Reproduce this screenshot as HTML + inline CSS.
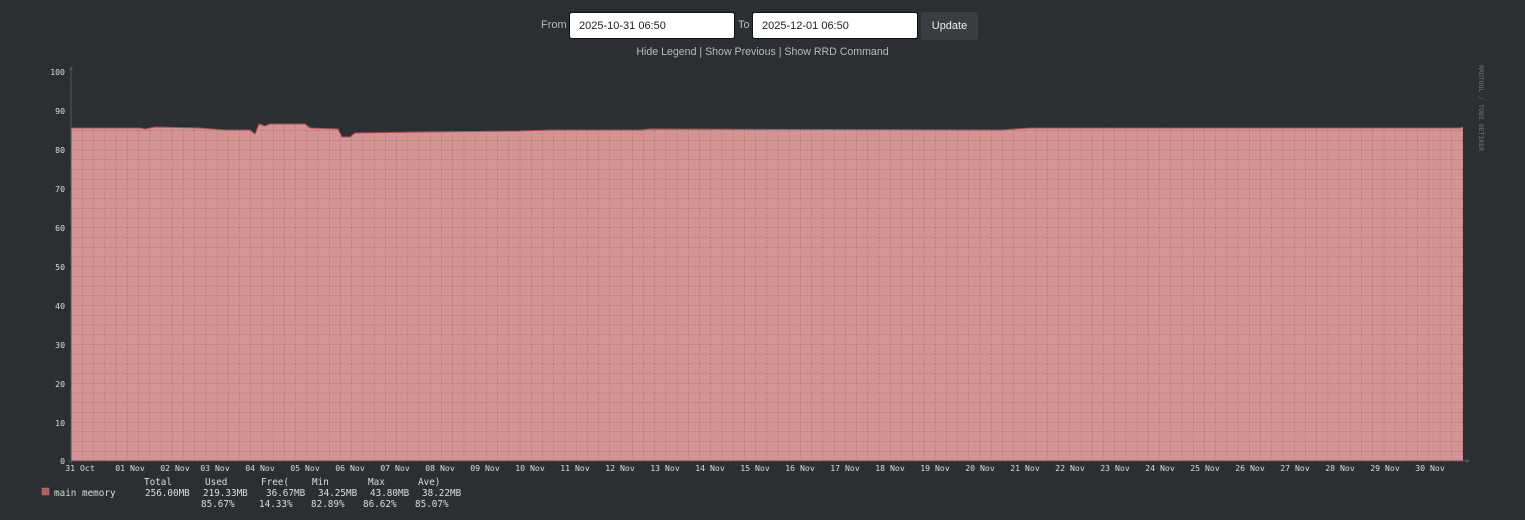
<!DOCTYPE html>
<html><head><style>
body{margin:0;background:#2b2e33;width:1525px;height:520px;overflow:hidden;font-family:"Liberation Sans",sans-serif;}
.f{position:absolute;top:12px;height:27px;border:1px solid #111;border-radius:3px;background:#fff;color:#222;font-size:11px;line-height:27px;padding-left:9px;box-sizing:border-box}
.lbl{position:absolute;top:19px;font-size:11px;color:#bbb}
.btn{position:absolute;left:921px;top:12px;width:57px;height:28px;background:#3a3d42;border-radius:3px;color:#eee;font-size:11px;line-height:28px;text-align:center}
.links{position:absolute;top:46px;left:0;width:1525px;text-align:center;font-size:10.6px;color:#bbb;line-height:13px}
svg{position:absolute;left:0;top:0}
svg text{font-family:"DejaVu Sans Mono","Liberation Mono",monospace;font-size:8.2px;fill:#ddd}
.lg{font-size:9.3px}
</style></head><body>
<span class="lbl" style="left:541px">From</span>
<div class="f" style="left:569px;width:166px">2025-10-31 06:50</div>
<span class="lbl" style="left:738px">To</span>
<div class="f" style="left:752px;width:166px">2025-12-01 06:50</div>
<div class="btn">Update</div>
<div class="links">Hide Legend | Show Previous | Show RRD Command</div>
<svg width="1525" height="520">
<defs>
<pattern id="g" x="71" y="72" width="11.22" height="9.72" patternUnits="userSpaceOnUse">
<path d="M0 0V9.72M0 0H11.22" stroke="#7a4848" stroke-width="0.7" stroke-dasharray="1.5 1.5" fill="none"/>
</pattern>
<pattern id="g2" x="71" y="72" width="11.22" height="9.72" patternUnits="userSpaceOnUse">
<path d="M0 0V9.72M0 0H11.22" stroke="#3a3e44" stroke-width="0.6" stroke-dasharray="1.5 1.5" fill="none"/>
</pattern>
<clipPath id="c"><polygon points="71,461 71,128 140,128 145,129 155,127 200,128 225,130 250,130 255,134 259,124 265,126 270,124 305,124 310,128 338,129 342,137 350,137 355,133 420,132 520,131 550,130 640,130 650,129 1000,130 1030,128 1460,128 1463,127 1463,461"/></clipPath>
</defs>
<rect x="71" y="72" width="1392" height="389" fill="url(#g2)"/>
<polygon fill="#d49494" points="71,461 71,128 140,128 145,129 155,127 200,128 225,130 250,130 255,134 259,124 265,126 270,124 305,124 310,128 338,129 342,137 350,137 355,133 420,132 520,131 550,130 640,130 650,129 1000,130 1030,128 1460,128 1463,127 1463,461"/>
<rect x="71" y="72" width="1392" height="389" fill="url(#g)" clip-path="url(#c)" opacity="0.85"/>
<polyline fill="none" stroke="#c04848" stroke-width="1" points="71,128 140,128 145,129 155,127 200,128 225,130 250,130 255,134 259,124 265,126 270,124 305,124 310,128 338,129 342,137 350,137 355,133 420,132 520,131 550,130 640,130 650,129 1000,130 1030,128 1460,128 1463,127"/>
<line x1="71" y1="68" x2="71" y2="463" stroke="#555"/>
<line x1="68" y1="461" x2="1466" y2="461" stroke="#555"/>
<path d="M69 70 L71 66 L73 70Z M1466 459 L1470 461 L1466 463Z" fill="#555"/>
<g text-anchor="end">
<text x="65" y="75">100</text><text x="65" y="114">90</text><text x="65" y="153">80</text><text x="65" y="192">70</text><text x="65" y="231">60</text><text x="65" y="270">50</text><text x="65" y="309">40</text><text x="65" y="348">30</text><text x="65" y="387">20</text><text x="65" y="426">10</text><text x="65" y="464">0</text>
</g>
<g text-anchor="middle">
<text x="80" y="471">31 Oct</text><text x="130" y="471">01 Nov</text><text x="175" y="471">02 Nov</text><text x="215" y="471">03 Nov</text><text x="260" y="471">04 Nov</text><text x="305" y="471">05 Nov</text><text x="350" y="471">06 Nov</text><text x="395" y="471">07 Nov</text><text x="440" y="471">08 Nov</text><text x="485" y="471">09 Nov</text><text x="530" y="471">10 Nov</text><text x="575" y="471">11 Nov</text><text x="620" y="471">12 Nov</text><text x="665" y="471">13 Nov</text><text x="710" y="471">14 Nov</text><text x="755" y="471">15 Nov</text><text x="800" y="471">16 Nov</text><text x="845" y="471">17 Nov</text><text x="890" y="471">18 Nov</text><text x="935" y="471">19 Nov</text><text x="980" y="471">20 Nov</text><text x="1025" y="471">21 Nov</text><text x="1070" y="471">22 Nov</text><text x="1115" y="471">23 Nov</text><text x="1160" y="471">24 Nov</text><text x="1205" y="471">25 Nov</text><text x="1250" y="471">26 Nov</text><text x="1295" y="471">27 Nov</text><text x="1340" y="471">28 Nov</text><text x="1385" y="471">29 Nov</text><text x="1430" y="471">30 Nov</text>
</g>
<text x="1479" y="65" transform="rotate(90 1479 65)" style="font-size:6.5px;fill:#777">RRDTOOL / TOBI OETIKER</text>
<rect x="42" y="488" width="7" height="7" fill="#c05858" stroke="#888" stroke-width="0.5"/>
<g class="lg">
<text class="lg" x="54" y="496">main memory</text>
<text class="lg" x="144" y="485">Total</text><text class="lg" x="205" y="485">Used</text><text class="lg" x="261" y="485">Free(</text><text class="lg" x="312" y="485">Min</text><text class="lg" x="368" y="485">Max</text><text class="lg" x="418" y="485">Ave)</text>
<text class="lg" x="145" y="496">256.00MB</text><text class="lg" x="203" y="496">219.33MB</text><text class="lg" x="266" y="496">36.67MB</text><text class="lg" x="318" y="496">34.25MB</text><text class="lg" x="370" y="496">43.80MB</text><text class="lg" x="422" y="496">38.22MB</text>
<text class="lg" x="201" y="507">85.67%</text><text class="lg" x="259" y="507">14.33%</text><text class="lg" x="311" y="507">82.89%</text><text class="lg" x="363" y="507">86.62%</text><text class="lg" x="415" y="507">85.07%</text>
</g>
</svg>
</body></html>
